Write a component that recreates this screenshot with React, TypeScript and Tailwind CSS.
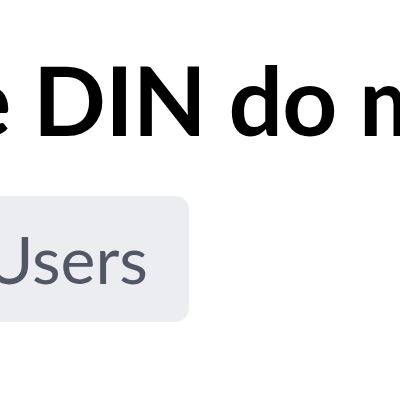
export default function App() {
  return (
    <div className="w-[400px] h-[400px] overflow-hidden bg-white" style={{ fontFamily: 'Lato, "Noto Sans", sans-serif' }}>
      <div className="pt-[51px] whitespace-nowrap">
        <h1 className="ml-[-40px] text-[96px] leading-none font-bold tracking-[-0.8px] text-black">e DIN do mundo</h1>
      </div>
      <div className="mt-[49px] flex">
        <span className="ml-[-75px] rounded-[14px] bg-[#ebedf1] pl-[60px] pr-[41px] py-[30px] text-[66px] leading-none font-normal text-[#515765]">
          Users
        </span>
      </div>
    </div>
  );
}
